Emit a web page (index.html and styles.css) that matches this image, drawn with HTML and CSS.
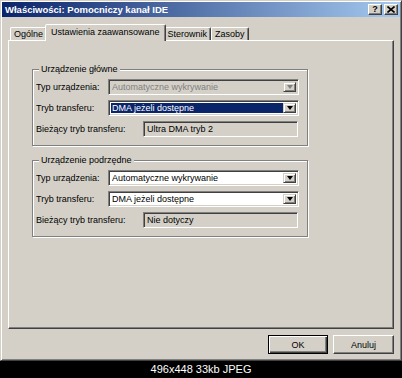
FILE: index.html
```html
<!DOCTYPE html>
<html lang="pl">
<head>
    <meta charset="UTF-8">
    <title>Właściwości: Pomocniczy kanał IDE</title>
    <link rel="stylesheet" href="styles.css">
</head>
<body>
    <div class="window">
        <div class="titlebar">
            <span class="title">Właściwości: Pomocniczy kanał IDE</span>
            <div class="caption-buttons">
                <span class="cbtn help">?</span>
                <span class="cbtn">
                    <svg width="8" height="7" viewBox="0 0 8 7"><path d="M0.5 0.5 L7.5 6.5 M7.5 0.5 L0.5 6.5" stroke="#000" stroke-width="1.6"/></svg>
                </span>
            </div>
        </div>

        <div class="content">
            <div class="tabs">
                <div class="tab">Ogólne</div>
                <div class="tab active">Ustawienia zaawansowane</div>
                <div class="tab">Sterownik</div>
                <div class="tab">Zasoby</div>
            </div>

            <div class="panel">
                <div class="group">
                    <div class="legend">Urządzenie główne</div>
                    <div class="rows">
                        <div class="row">
                            <label>Typ urządzenia:</label>
                            <div class="combo disabled">
                                <span class="value">Automatyczne wykrywanie</span>
                                <span class="drop"></span>
                            </div>
                        </div>
                        <div class="row">
                            <label>Tryb transferu:</label>
                            <div class="combo">
                                <span class="value selected">DMA jeżeli dostępne</span>
                                <span class="drop"></span>
                            </div>
                        </div>
                        <div class="row wide">
                            <label>Bieżący tryb transferu:</label>
                            <div class="field">Ultra DMA tryb 2</div>
                        </div>
                    </div>
                </div>

                <div class="group">
                    <div class="legend">Urządzenie podrzędne</div>
                    <div class="rows">
                        <div class="row">
                            <label>Typ urządzenia:</label>
                            <div class="combo">
                                <span class="value">Automatyczne wykrywanie</span>
                                <span class="drop"></span>
                            </div>
                        </div>
                        <div class="row">
                            <label>Tryb transferu:</label>
                            <div class="combo">
                                <span class="value">DMA jeżeli dostępne</span>
                                <span class="drop"></span>
                            </div>
                        </div>
                        <div class="row wide">
                            <label>Bieżący tryb transferu:</label>
                            <div class="field">Nie dotyczy</div>
                        </div>
                    </div>
                </div>
            </div>

            <div class="buttons">
                <button class="btn default">OK</button>
                <button class="btn cancel">Anuluj</button>
            </div>
        </div>
    </div>
    <div class="caption">496x448 33kb JPEG</div>
</body>
</html>
```

FILE: styles.css
```css
body {
    margin: 0;
    width: 402px;
    height: 378px;
    overflow: hidden;
    background: #000;
    font-family: 'Liberation Sans', Arial, sans-serif;
    font-size: 9px;
    color: #000;
}

.window {
    box-sizing: border-box;
    width: 402px;
    height: 361px;
    padding: 1px;
    background: #d4d0c8;
    border: 1px solid;
    border-color: #d4d0c8 #404040 #404040 #d4d0c8;
    box-shadow: inset 1px 1px 0 #fff, inset -1px -1px 0 #808080;
    display: flex;
    flex-direction: column;
}

.titlebar {
    height: 15px;
    padding: 0 2px 0 3px;
    background: linear-gradient(to right, #0a246a, #a6caf0);
    display: flex;
    align-items: center;
    justify-content: space-between;
}

.title {
    color: #fff;
    font-weight: bold;
    font-size: 9.5px;
}

.caption-buttons {
    display: flex;
    gap: 2px;
}

.cbtn {
    box-sizing: border-box;
    width: 14px;
    height: 11px;
    background: #d4d0c8;
    border: 1px solid;
    border-color: #fff #404040 #404040 #fff;
    box-shadow: inset -1px -1px 0 #808080;
    display: flex;
    align-items: center;
    justify-content: center;
    font-weight: bold;
    font-size: 9px;
    line-height: 9px;
}

.content {
    flex: 1;
    display: flex;
    flex-direction: column;
    padding: 7px 6px 5px;
}

.tabs {
    height: 16px;
    padding-left: 2px;
    display: flex;
    align-items: flex-end;
}

.tab {
    box-sizing: border-box;
    height: 13px;
    padding: 0 3px;
    border: 1px solid;
    border-bottom: none;
    border-color: #fff #404040 transparent #fff;
    border-radius: 2px 2px 0 0;
    box-shadow: inset -1px 0 0 #808080;
    display: flex;
    align-items: center;
}

.tab.active {
    position: relative;
    z-index: 2;
    height: 17px;
    margin: 0 -2px -1px;
    padding: 0 5px 2px;
    background: #d4d0c8;
}

.panel {
    flex: 1;
    padding: 28px 0 0 23px;
    border: 1px solid;
    border-color: #fff #404040 #404040 #fff;
    box-shadow: inset -1px -1px 0 #808080;
}

.group {
    box-sizing: border-box;
    width: 276px;
    padding: 0 8px 8px 3px;
    border: 1px solid #808080;
    box-shadow: inset 1px 1px 0 #fff, 1px 1px 0 #fff;
}

.group + .group {
    margin-top: 14px;
}

.legend {
    display: table;
    margin: -6px 0 0 3px;
    padding: 0 2px;
    line-height: 11px;
    background: #d4d0c8;
}

.rows {
    margin-top: 4px;
}

.row {
    height: 16px;
    display: flex;
    align-items: center;
}

.row + .row {
    margin-top: 5px;
}

.row label {
    width: 72px;
}

.row.wide label {
    width: 107px;
}

.combo, .field {
    box-sizing: border-box;
    height: 16px;
    border: 1px solid;
    border-color: #808080 #fff #fff #808080;
    box-shadow: inset 1px 1px 0 #404040, inset -1px -1px 0 #d4d0c8;
}

.combo {
    width: 191px;
    padding: 2px;
    background: #fff;
    display: flex;
}

.combo .value {
    flex: 1;
    padding-left: 1px;
    line-height: 10px;
    white-space: nowrap;
    overflow: hidden;
}

.combo .value.selected {
    background: #0a246a;
    color: #fff;
}

.combo.disabled {
    background: #d4d0c8;
}

.combo.disabled .value {
    color: #808080;
}

.drop {
    box-sizing: border-box;
    width: 13px;
    background: #d4d0c8;
    border: 1px solid;
    border-color: #d4d0c8 #404040 #404040 #d4d0c8;
    box-shadow: inset 1px 1px 0 #fff, inset -1px -1px 0 #808080;
    display: flex;
    align-items: center;
    justify-content: center;
}

.drop::after {
    content: '';
    width: 0;
    height: 0;
    border-style: solid;
    border-width: 4px 3.5px 0;
    border-color: #000 transparent transparent;
}

.combo.disabled .drop::after {
    border-top-color: #808080;
}

.field {
    width: 155px;
    padding: 0 3px;
    line-height: 14px;
    background: #d4d0c8;
}

.buttons {
    margin-top: 6px;
    display: flex;
    justify-content: flex-end;
    gap: 5px;
}

.btn {
    box-sizing: border-box;
    width: 60px;
    height: 19px;
    padding: 0;
    background: #d4d0c8;
    font-family: 'Liberation Sans', Arial, sans-serif;
    font-size: 9px;
    color: #000;
    border: 1px solid;
    border-color: #fff #404040 #404040 #fff;
    box-shadow: inset -1px -1px 0 #808080;
}

.btn.default {
    border: 1px solid #000;
    box-shadow: inset 1px 1px 0 #fff, inset -1px -1px 0 #404040, inset -2px -2px 0 #808080;
}

.btn.cancel {
    width: 61px;
}

.caption {
    height: 17px;
    line-height: 17px;
    text-align: center;
    color: #fff;
    font-size: 11px;
}
```
